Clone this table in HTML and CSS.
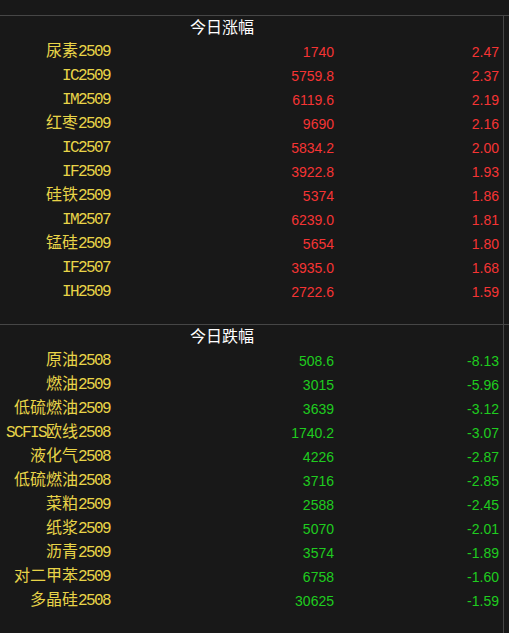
FILE: index.html
```html
<!DOCTYPE html>
<html lang="zh-CN">
<head>
    <meta charset="UTF-8">
    <title>今日涨跌幅</title>
    <link rel="stylesheet" href="styles.css">
</head>
<body>
    <div class="board">
        <div class="panel">
            <div class="section up">
                <div class="title">今日涨幅</div>
                <div class="row"><span class="name"><span class="cn">尿素</span>2509</span><span class="price">1740</span><span class="pct">2.47</span></div>
                <div class="row"><span class="name">IC2509</span><span class="price">5759.8</span><span class="pct">2.37</span></div>
                <div class="row"><span class="name">IM2509</span><span class="price">6119.6</span><span class="pct">2.19</span></div>
                <div class="row"><span class="name"><span class="cn">红枣</span>2509</span><span class="price">9690</span><span class="pct">2.16</span></div>
                <div class="row"><span class="name">IC2507</span><span class="price">5834.2</span><span class="pct">2.00</span></div>
                <div class="row"><span class="name">IF2509</span><span class="price">3922.8</span><span class="pct">1.93</span></div>
                <div class="row"><span class="name"><span class="cn">硅铁</span>2509</span><span class="price">5374</span><span class="pct">1.86</span></div>
                <div class="row"><span class="name">IM2507</span><span class="price">6239.0</span><span class="pct">1.81</span></div>
                <div class="row"><span class="name"><span class="cn">锰硅</span>2509</span><span class="price">5654</span><span class="pct">1.80</span></div>
                <div class="row"><span class="name">IF2507</span><span class="price">3935.0</span><span class="pct">1.68</span></div>
                <div class="row"><span class="name">IH2509</span><span class="price">2722.6</span><span class="pct">1.59</span></div>
            </div>
            <div class="divider"></div>
            <div class="section down">
                <div class="title">今日跌幅</div>
                <div class="row"><span class="name"><span class="cn">原油</span>2508</span><span class="price">508.6</span><span class="pct">-8.13</span></div>
                <div class="row"><span class="name"><span class="cn">燃油</span>2509</span><span class="price">3015</span><span class="pct">-5.96</span></div>
                <div class="row"><span class="name"><span class="cn">低硫燃油</span>2509</span><span class="price">3639</span><span class="pct">-3.12</span></div>
                <div class="row"><span class="name">SCFIS<span class="cn">欧线</span>2508</span><span class="price">1740.2</span><span class="pct">-3.07</span></div>
                <div class="row"><span class="name"><span class="cn">液化气</span>2508</span><span class="price">4226</span><span class="pct">-2.87</span></div>
                <div class="row"><span class="name"><span class="cn">低硫燃油</span>2508</span><span class="price">3716</span><span class="pct">-2.85</span></div>
                <div class="row"><span class="name"><span class="cn">菜粕</span>2509</span><span class="price">2588</span><span class="pct">-2.45</span></div>
                <div class="row"><span class="name"><span class="cn">纸浆</span>2509</span><span class="price">5070</span><span class="pct">-2.01</span></div>
                <div class="row"><span class="name"><span class="cn">沥青</span>2509</span><span class="price">3574</span><span class="pct">-1.89</span></div>
                <div class="row"><span class="name"><span class="cn">对二甲苯</span>2509</span><span class="price">6758</span><span class="pct">-1.60</span></div>
                <div class="row"><span class="name"><span class="cn">多晶硅</span>2508</span><span class="price">30625</span><span class="pct">-1.59</span></div>
            </div>
        </div>
    </div>
</body>
</html>
```

FILE: styles.css
```css
html, body {
    margin: 0;
    padding: 0;
    background-color: #181818;
}
body {
    padding-top: 15px;
    height: 618px;
    overflow: hidden;
}
.board {
    border-top: 1px solid #464646;
    height: 617px;
}
.panel {
    width: 503px;
    height: 100%;
    border-right: 1px solid #464646;
}
.section.up {
    padding-bottom: 20px;
}
.divider {
    border-top: 1px solid #464646;
    margin-right: -6px;
}
.title {
    height: 24px;
    line-height: 21px;
    padding-left: 190px;
    color: #ffffff;
    font-family: "Noto Sans CJK SC", sans-serif;
    font-size: 16px;
}
.row {
    display: grid;
    grid-template-columns: 110px 224px 165px;
    height: 24px;
    line-height: 25px;
    font-family: "Liberation Sans", Arial, sans-serif;
    font-size: 14px;
}
.name {
    text-align: right;
    color: #e8d448;
    font-family: "Liberation Mono", monospace;
    font-size: 16px;
    letter-spacing: -1.6px;
    white-space: nowrap;
}
.name .cn {
    font-family: "Noto Sans CJK SC", sans-serif;
    letter-spacing: 0;
    line-height: 16px;
}
.price, .pct {
    text-align: right;
}
.up .price, .up .pct {
    color: #f53434;
}
.down .price, .down .pct {
    color: #1fcc1f;
}
```
